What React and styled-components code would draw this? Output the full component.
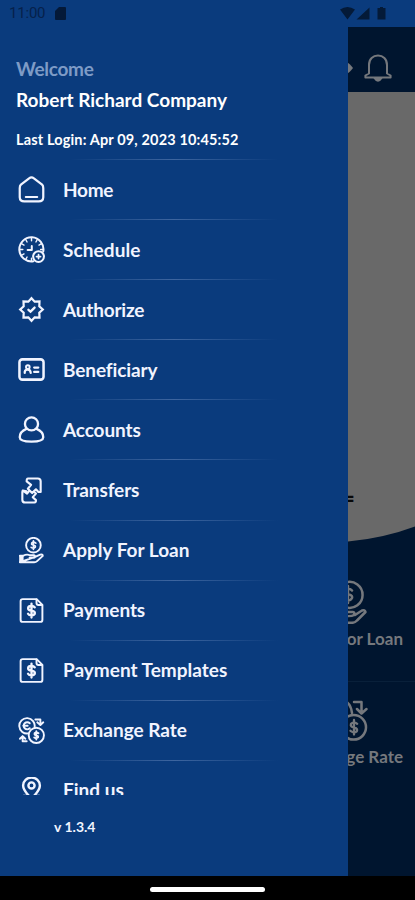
import React from "react";
import styled, { createGlobalStyle } from "styled-components";

const strokeProps = {
  fill: "none",
  stroke: "currentColor",
  strokeWidth: 2,
  strokeLinecap: "round",
  strokeLinejoin: "round",
};

const HomeIcon = () => (
  <Icon viewBox="0 0 28 28" {...strokeProps} strokeWidth="2.3">
    <path d="M3 9 L11.5 2.4 Q14 0.6 16.5 2.4 L25 9 Q26.3 10.2 26.2 13 V22 Q26.1 26.3 21.5 26.3 H6.5 Q1.9 26.3 1.8 22 V13 Q1.7 10.2 3 9Z" />
    <path d="M8 21.8 H20" strokeWidth="2" />
  </Icon>
);

const ScheduleIcon = () => (
  <Icon viewBox="0 0 28 28" {...strokeProps} strokeWidth="2.1">
    <path d="M26.2 16 A12.5 12.5 0 1 0 16 26.2" />
    <path d="M14 2 V5 M20 3.6 L18.6 6.2 M24.4 8 L21.8 9.4 M3.6 8 L6.2 9.4 M8 3.6 L9.4 6.2 M2 14 H5 M26 14 H23.5 M3.6 20 L6.2 18.6 M8 24.4 L9.4 21.8 M14 26 V23" strokeWidth="1.5" />
    <path d="M14.3 10.5 V14.6 H10" />
    <circle cx="21.3" cy="21.3" r="5.6" />
    <path d="M21.3 19.2 V23.4 M19.2 21.3 H23.4" strokeWidth="1.8" />
  </Icon>
);

const AuthorizeIcon = () => (
  <Icon viewBox="0 0 28 28" {...strokeProps} strokeWidth="2.3" strokeLinejoin="miter">
    <path d="M14 2.3 L17.3 5.9 L22.3 5.7 L22.1 10.7 L25.7 14 L22.1 17.3 L22.3 22.3 L17.3 22.1 L14 25.7 L10.7 22.1 L5.7 22.3 L5.9 17.3 L2.3 14 L5.9 10.7 L5.7 5.7 L10.7 5.9Z" />
    <path d="M10.8 14.3 L13 16.2 L17.2 12" strokeWidth="2.4" />
  </Icon>
);

const BeneficiaryIcon = () => (
  <Icon viewBox="0 0 28 28" {...strokeProps}>
    <rect x="1.5" y="3.5" width="25" height="21" rx="3" strokeWidth="2.6" />
    <path d="M7 17.6 V16.4 Q7.4 14.2 10 14.2 Q13 14.2 13.2 17.6" strokeWidth="2.3" />
    <circle cx="10.2" cy="11.5" r="1.9" />
    <path d="M16.8 12 H21 M16.8 16.5 H21" strokeWidth="2.4" />
  </Icon>
);

const AccountsIcon = () => (
  <Icon viewBox="0 0 28 28" {...strokeProps} strokeWidth="2.4">
    <circle cx="14" cy="8.2" r="6.8" />
    <path d="M8.7 13.4 C4 15.4 1.8 19 1.8 22 C1.8 24.7 4.5 26.5 14 26.5 C23.5 26.5 26.2 24.7 26.2 22 C26.2 19 24 15.4 19.3 13.4" />
  </Icon>
);

const TransfersIcon = () => (
  <Icon viewBox="0 0 28 28" {...strokeProps} strokeWidth="2.2">
    <path d="M10.5 1.5 H20.5 Q23.5 1.5 23.5 4.5 V15.5 H21.2 L18.6 12.8 L14.7 16.7 L10.2 12.2 L13.6 8.2 L9 4.5 Q8.8 1.5 10.5 1.5Z" />
    <path d="M8.8 14.8 L5 14 Q4.5 14 4.5 15.5 V23.5 Q4.5 26.5 7.5 26.5 H17 Q18.8 26.3 18.6 24 L15.3 20.9 L18.6 17.2 L16.5 15.2 M4.8 14 L9.4 17.2 L11.7 14.4" />
  </Icon>
);

const LoanIcon = () => (
  <Icon viewBox="0 0 28 28" {...strokeProps} strokeWidth="2">
    <circle cx="16" cy="8.5" r="7.6" />
    <path d="M18.5 6.4 Q16 4.4 14.2 6.4 Q13.6 8.2 16 8.5 Q18.6 8.9 17.9 10.6 Q16.2 12.5 13.6 10.7 M16 3.9 V13" strokeWidth="1.7" />
    <path d="M2 19.5 H5.5 Q9 17.3 12.6 19 H16.3 Q18 19.2 17.6 20.8 Q17.3 21.6 15.8 21.6 H12 M17.8 20.7 L23 18.3 Q25.7 17.6 25.7 19.6 L19.8 25 Q18.6 26.2 16.8 26.2 H2Z" />
    <path d="M1.2 19 H5.8 V26.6 H1.2Z" fill="currentColor" stroke="none" />
  </Icon>
);

const PaymentIcon = () => (
  <Icon viewBox="0 0 28 28" {...strokeProps}>
    <path d="M19.3 2.2 H5 Q2.7 2.2 2.7 4.5 V23.5 Q2.7 25.8 5 25.8 H23 Q25.3 25.8 25.3 23.5 V8.2Z" />
    <path d="M19.2 2.6 V6.3 Q19.2 8.3 21.2 8.3 H25" />
    <path d="M17.4 10.7 Q16.4 9.3 14 9.3 Q10.5 9.3 10.5 11.6 Q10.5 13.8 14 14.1 Q17.5 14.5 17.5 16.7 Q17.5 19 14 19 Q11.3 19 10.4 17.3 M14 7 V21.3" strokeWidth="2.4" />
  </Icon>
);

const ExchangeIcon = () => (
  <Icon viewBox="0 0 28 28" {...strokeProps} strokeWidth="2">
    <path d="M10.8 17 A8 8 0 1 1 17.2 10.6" />
    <path d="M12.2 6.5 A3.7 3.7 0 1 0 12.2 11.7 M5.5 9 H10" />
    <circle cx="19" cy="19" r="7.9" />
    <path d="M21.3 16.9 Q19 15.2 17.2 16.8 Q16.6 18.7 19 19 Q21.5 19.5 20.8 21.2 Q19.2 22.7 16.8 21.2 M19 14.6 V23.4" strokeWidth="1.9" />
    <path d="M18 2.5 H23.2 V7.5 M20 5.5 L23.2 8.4 L26.2 5.5 M9 25.2 H4.8 V20.5 M2 22.6 L4.8 19.8 L7.6 22.6" />
  </Icon>
);

const FindIcon = () => (
  <Icon viewBox="0 0 28 28" {...strokeProps} strokeWidth="2.5">
    <path d="M14 23 C10 17.5 5.3 14.3 5.3 8.8 A8.7 8.2 0 0 1 22.7 8.8 C22.7 14.3 18 17.5 14 23Z" />
    <circle cx="14" cy="8.8" r="3.2" />
    <path d="M8.5 19.6 H5.8 L3 24 M19.5 19.6 H22.2 L25 24" />
  </Icon>
);

const menu = [
  { label: "Home", icon: HomeIcon, spacing: "-0.3px" },
  { label: "Schedule", icon: ScheduleIcon, spacing: "0.1px" },
  { label: "Authorize", icon: AuthorizeIcon, spacing: "-0.2px" },
  { label: "Beneficiary", icon: BeneficiaryIcon, spacing: "-0.1px" },
  { label: "Accounts", icon: AccountsIcon, spacing: "-0.1px" },
  { label: "Transfers", icon: TransfersIcon, spacing: "-0.1px" },
  { label: "Apply For Loan", icon: LoanIcon },
  { label: "Payments", icon: PaymentIcon, spacing: "-0.1px" },
  { label: "Payment Templates", icon: PaymentIcon },
  { label: "Exchange Rate", icon: ExchangeIcon },
  { label: "Find us", icon: FindIcon },
];

function App() {
  return (
    <Phone>
      <GlobalStyle />
      <StatusBar>
        <Clock>11:00</Clock>
        <SdCard viewBox="0 0 11 13">
          <path d="M4 0 H10 Q11 0 11 1 V12 Q11 13 10 13 H1 Q0 13 0 12 V4Z" />
        </SdCard>
        <Signals viewBox="0 0 46 13">
          <path d="M0 2.6 Q7.5 -2.6 15 2.6 L7.5 12.5Z M29.5 0.5 V12.5 H16.5Z M40 0 H43 V1 H45.5 V12.5 H37.5 V1 H40Z" />
        </Signals>
      </StatusBar>
      <Screen>
        <Drawer>
          <Profile>
            <Welcome>Welcome</Welcome>
            <Name>Robert Richard Company</Name>
            <LastLogin>Last Login: Apr 09, 2023 10:45:52</LastLogin>
          </Profile>
          <Menu>
            {menu.map(({ label, icon: ItemIcon, spacing }) => (
              <MenuItem key={label}>
                <ItemIcon />
                <Label $spacing={spacing}>{label}</Label>
              </MenuItem>
            ))}
          </Menu>
          <Version>v 1.3.4</Version>
        </Drawer>
        <Dashboard>
          <TopBar>
            <Arrow viewBox="0 0 5 10">
              <path d="M0 0 Q1.5 0.5 5 5 Q1.5 9.5 0 10Z" fill="currentColor" />
            </Arrow>
            <Bell viewBox="0 0 28 28" {...strokeProps}>
              <path d="M5 19.5 V11 C5 5 9 1.6 14 1.6 S23 5 23 11 V19.5 L26.6 21.5 V23.5 H1.4 V21.5Z" />
              <path d="M10.5 24 Q14 29.5 17.5 24Z" fill="currentColor" />
            </Bell>
          </TopBar>
          <Balance>=</Balance>
          <Curve viewBox="0 0 67 16" preserveAspectRatio="none">
            <path d="M0 0 H67 V0.4 Q36 12 0 15.5Z" fill="#696969" />
          </Curve>
          <Tile $height={139} $top={38}>
            <TileIcon viewBox="0 0 30 44" {...strokeProps} strokeWidth="2.5">
              <path d="M-2 2.4 A13 13 0 1 1 -2 27.4" />
              <path d="M4 10.5 Q2 8 -2 8.5 M-2 14 Q5 14.5 4 18 Q2 21.5 -2 20.5 M0 6 V23" />
              <path d="M-3 32 H5 Q7 32 6 35 Q4 36.5 -3 36 M7 35 L14 30.5 Q17 29.5 17.5 32 L9 40.5 Q7 42.8 4 42.8 H-3" />
            </TileIcon>
            <TileLabel>Apply For Loan</TileLabel>
          </Tile>
          <Tile $height={179} $top={16} $line>
            <TileIcon viewBox="0 0 30 44" {...strokeProps} strokeWidth="2.5">
              <path d="M-2 3.5 Q3 6.5 4 15 M6 4 H13.5 V14 M9 11 L13.5 15.5 L18.5 11" />
              <circle cx="5.7" cy="29.3" r="12.3" />
              <path d="M9.2 25.8 Q6 23 3 25.8 Q2 28.8 6 29.3 Q10.2 30.3 8.8 33.3 Q6 35.5 2.5 32.8 M6 22 V36.5" strokeWidth="2.3" />
            </TileIcon>
            <TileLabel>Exchange Rate</TileLabel>
          </Tile>
        </Dashboard>
      </Screen>
      <NavBar>
        <Handle />
      </NavBar>
    </Phone>
  );
}

const GlobalStyle = createGlobalStyle`
  * {
    box-sizing: border-box;
  }
  body {
    margin: 0;
    background: #000000;
  }
`;

const Phone = styled.div`
  display: flex;
  flex-direction: column;
  width: 415px;
  height: 900px;
  overflow: hidden;
  background: #0a3b7d;
  font-family: Lato, "Open Sans", sans-serif;
`;

const StatusBar = styled.div`
  display: flex;
  align-items: center;
  height: 27px;
  padding: 0 29px 0 9px;
  color: #06214b;
`;

const Clock = styled.span`
  width: 46px;
  font-family: Roboto, sans-serif;
  font-size: 15px;
  line-height: 27px;
  letter-spacing: -0.2px;
`;

const SdCard = styled.svg`
  width: 11px;
  height: 13px;
  fill: #041938;
`;

const Signals = styled.svg`
  width: 46px;
  height: 13px;
  margin-left: auto;
  fill: #041a38;
`;

const Screen = styled.div`
  display: flex;
  height: 849px;
`;

const Drawer = styled.div`
  display: flex;
  flex-direction: column;
  width: 348px;
  color: #f1f4ff;
`;

const Profile = styled.div`
  display: flex;
  flex-direction: column;
  height: 132px;
  padding: 30px 0 0 16px;
  white-space: nowrap;
`;

const Welcome = styled.span`
  font-size: 19px;
  font-weight: 700;
  line-height: 24px;
  letter-spacing: -0.3px;
  color: #7e9bc6;
`;

const Name = styled.span`
  margin-top: 7px;
  font-size: 19px;
  font-weight: 700;
  line-height: 24px;
  color: #ffffff;
`;

const LastLogin = styled.span`
  margin-top: 18px;
  font-size: 14.5px;
  font-weight: 700;
  line-height: 20px;
  letter-spacing: 0.15px;
  color: #ffffff;
`;

const Menu = styled.div`
  height: 636px;
  overflow: hidden;
`;

const MenuItem = styled.div`
  display: flex;
  align-items: center;
  gap: 18px;
  height: 60.1px;
  padding: 1px 0 0 18px;
  background: linear-gradient(90deg, transparent, #3d659f 50%, transparent) 70px 0 / 208px 1px no-repeat;
`;

const Icon = styled.svg`
  width: 27px;
  height: 27px;
  flex: none;
`;

const Label = styled.span`
  font-size: 19px;
  font-weight: 700;
  line-height: 24px;
  letter-spacing: ${(props) => props.$spacing || "normal"};
  white-space: nowrap;
`;

const Version = styled.span`
  padding: 22px 0 0 54px;
  font-size: 14px;
  font-weight: 700;
  line-height: 20px;
`;

const Dashboard = styled.div`
  display: flex;
  flex-direction: column;
  width: 67px;
  overflow: hidden;
  color: #75787d;
  background: #00152f;
`;

const TopBar = styled.div`
  display: flex;
  align-items: center;
  gap: 11px;
  height: 65px;
  padding-top: 17px;
  flex: none;
`;

const Arrow = styled.svg`
  width: 5px;
  height: 10px;
`;

const Bell = styled.svg`
  width: 28px;
  height: 28px;
`;

const Balance = styled.div`
  height: 434px;
  padding: 393px 0 0 0;
  font-size: 22px;
  font-weight: 900;
  line-height: 28px;
  text-indent: -6px;
  color: #080808;
  background: #696969;
  flex: none;
`;

const Curve = styled.svg`
  width: 67px;
  height: 16px;
  flex: none;
`;

const Tile = styled.div`
  display: flex;
  flex-direction: column;
  gap: 3px;
  height: ${(props) => props.$height}px;
  padding-top: ${(props) => props.$top}px;
  border-top: ${(props) => (props.$line ? "1px solid #09203a" : "none")};
  flex: none;
`;

const TileIcon = styled.svg`
  width: 30px;
  height: 44px;
`;

const TileLabel = styled.span`
  align-self: flex-end;
  padding-right: 12px;
  font-size: 17px;
  font-weight: 700;
  line-height: 24px;
  white-space: nowrap;
`;

const NavBar = styled.div`
  display: flex;
  justify-content: center;
  height: 24px;
  padding-top: 11px;
  background: #000000;
`;

const Handle = styled.div`
  width: 115px;
  height: 5px;
  border-radius: 3px;
  background: #ffffff;
`;

export default App;
